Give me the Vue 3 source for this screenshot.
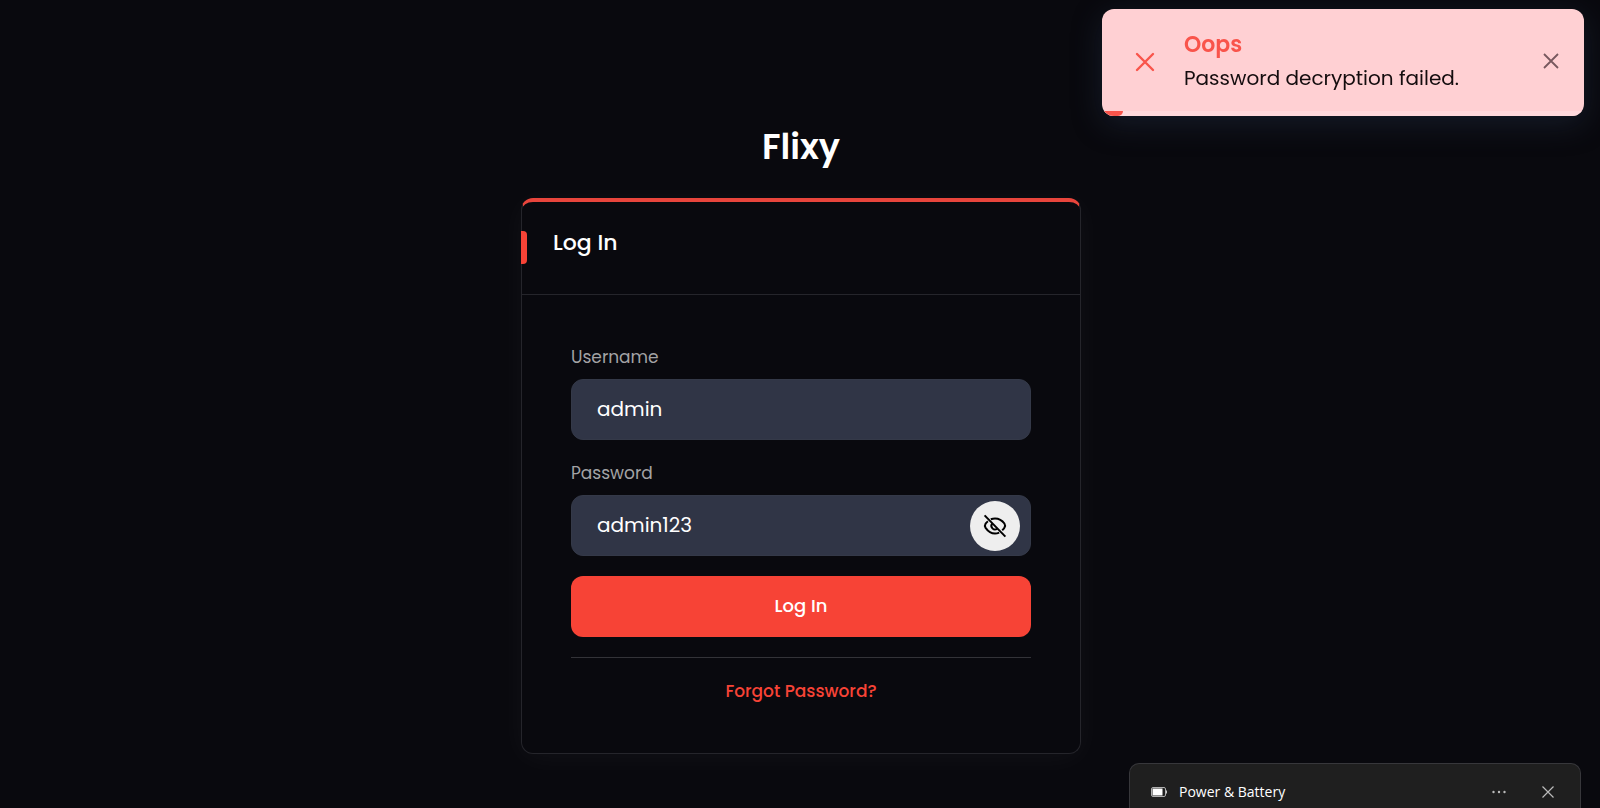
<script setup>
import { computed, ref } from "vue";

const username = ref("admin");
const password = ref("admin123");
const passwordVisible = ref(true);
const toast = ref({ title: "Oops", message: "Password decryption failed.", progress: 4.4 });
const noticeOpen = ref(true);

const passwordType = computed(() => (passwordVisible.value ? "text" : "password"));

function togglePassword() {
  passwordVisible.value = !passwordVisible.value;
}

function closeToast() {
  toast.value = null;
}
</script>

<template>
  <main class="login-page">
    <h1 class="brand">Flixy</h1>

    <section class="card">
      <header class="card-head">
        <h2>Log In</h2>
      </header>

      <form class="card-body" @submit.prevent>
        <div class="field">
          <label for="username">Username</label>
          <input id="username" v-model="username" class="text-input" type="text" autocomplete="off" spellcheck="false" />
        </div>

        <div class="field">
          <label for="password">Password</label>
          <div class="password-box">
            <input
              id="password"
              v-model="password"
              class="text-input"
              :type="passwordType"
              autocomplete="off"
              spellcheck="false"
            />
            <button class="eye-button" type="button" aria-label="Toggle password visibility" @click="togglePassword">
              <svg viewBox="0 0 24 24" aria-hidden="true">
                <path d="M7.8 5.2C9.1 4.7 10.5 4.4 12 4.4c4.6 0 7.8 2.8 9.4 5.1.9 1.4.9 2.900 0 4.300-.6.9-1.300 1.700-2.200 2.500" />
                <path d="M4.9 7.2C4 7.9 3.2 8.8 2.6 9.6c-.9 1.4-.9 2.9 0 4.3 1.6 2.3 4.8 5.7 9.4 5.7 1.5 0 2.9-.4 4.2-1" />
                <path d="M9.2 9.6a3.6 3.6 0 0 0 5 5.1" />
                <path d="M1.6 1.4l20.8 21.2" />
              </svg>
            </button>
          </div>
        </div>

        <button class="submit" type="submit">Log In</button>
        <hr class="divider" />
        <a class="forgot" href="#">Forgot Password?</a>
      </form>
    </section>
  </main>

  <aside v-if="toast" class="toast" role="alert">
    <svg class="toast-icon" viewBox="0 0 20 20" aria-hidden="true">
      <path d="M2 2l16 16M18 2L2 18" />
    </svg>
    <div class="toast-copy">
      <strong>{{ toast.title }}</strong>
      <p>{{ toast.message }}</p>
    </div>
    <button class="toast-close" type="button" aria-label="Close" @click="closeToast">
      <svg viewBox="0 0 16 16" aria-hidden="true">
        <path d="M1 1l14 14M15 1L1 15" />
      </svg>
    </button>
    <div class="toast-track">
      <div class="toast-progress" :style="{ width: toast.progress + '%' }"></div>
    </div>
  </aside>

  <aside v-if="noticeOpen" class="notice">
    <svg class="battery" viewBox="0 0 17 10" aria-hidden="true">
      <rect x="0.5" y="0.5" width="14" height="9" rx="1.5" fill="none" stroke="#b0b0b0" />
      <rect x="1.5" y="1.5" width="10" height="7" fill="#fff" />
      <path d="M15.5 3.5v3" stroke="#c8c8c8" />
    </svg>
    <span class="notice-title">Power &amp; Battery</span>
    <button type="button" aria-label="More options">
      <svg width="16" height="16" viewBox="0 0 16 16" aria-hidden="true">
        <g fill="currentColor">
          <circle cx="2.5" cy="8" r="1.2" />
          <circle cx="8" cy="8" r="1.2" />
          <circle cx="13.5" cy="8" r="1.2" />
        </g>
      </svg>
    </button>
    <button type="button" aria-label="Dismiss" @click="noticeOpen = false">
      <svg width="12" height="12" viewBox="0 0 12 12" aria-hidden="true">
        <path d="M.5.5l11 11M11.5.5l-11 11" fill="none" stroke="currentColor" stroke-width="1.2" />
      </svg>
    </button>
  </aside>
</template>

<style>
body {
  margin: 0;
  background: #09090e;
}
</style>

<style scoped>
.login-page,
.toast {
  font-family: Poppins, Inter, sans-serif;
}

.login-page {
  display: flex;
  flex-direction: column;
  align-items: center;
  box-sizing: border-box;
  min-height: 100vh;
  padding: 121px 16px 48px 18px;
  color: #fff;
}

.brand {
  margin: 0 0 25px;
  font-size: 35px;
  font-weight: 600;
  line-height: 52px;
}

.card {
  box-sizing: border-box;
  width: 100%;
  max-width: 560px;
  border: 1px solid #25252b;
  border-top: 4px solid #e8453c;
  border-radius: 12px;
  background: #09090e;
  box-shadow: 0 4px 30px rgba(255, 255, 255, 0.04);
}

.card-head {
  position: relative;
  padding: 24px 31px 34px;
  border-bottom: 1px solid #25252b;
}

.card-head::before {
  content: "";
  position: absolute;
  top: 29px;
  left: -1px;
  width: 6px;
  height: 33px;
  border-radius: 0 4px 4px 0;
  background: #f74336;
}

.card-head h2 {
  margin: 0;
  font-size: 22px;
  font-weight: 500;
  line-height: 34px;
}

.card-body {
  display: flex;
  flex-direction: column;
  gap: 20px;
  padding: 49px;
}

.field {
  display: flex;
  flex-direction: column;
  gap: 9px;
}

.field label {
  color: #a3a3a5;
  font-size: 17px;
  line-height: 26px;
}

.text-input {
  box-sizing: border-box;
  width: 100%;
  height: 61px;
  padding: 0 25px 2px;
  border: 1px solid #343948;
  border-radius: 12px;
  outline: none;
  background: #303546;
  color: #fff;
  font: inherit;
  font-size: 20px;
}

.password-box {
  position: relative;
}

.password-box .text-input {
  padding-right: 72px;
}

.eye-button {
  position: absolute;
  top: 6px;
  right: 11px;
  display: flex;
  align-items: center;
  justify-content: center;
  width: 50px;
  height: 50px;
  padding: 0;
  border: 0;
  border-radius: 50%;
  background: #eee;
  cursor: pointer;
}

.eye-button svg {
  width: 24px;
  height: 24px;
  fill: none;
  stroke: #000;
  stroke-width: 2;
}

.submit {
  height: 61px;
  padding: 0 0 2px;
  border: 0;
  border-radius: 12px;
  background: #f74336;
  color: #fff;
  font: inherit;
  font-size: 18px;
  font-weight: 500;
  cursor: pointer;
}

.divider {
  width: 100%;
  height: 1px;
  margin: 0;
  border: 0;
  background: #333338;
}

.forgot {
  align-self: center;
  color: #f74336;
  font-size: 17px;
  font-weight: 500;
  line-height: 26px;
  text-decoration: none;
}

.toast {
  position: fixed;
  top: 9px;
  right: 16px;
  display: flex;
  align-items: center;
  box-sizing: border-box;
  width: 482px;
  max-width: calc(100% - 32px);
  padding: 19px 25px 22px 33px;
  overflow: hidden;
  border-radius: 12px;
  background: #ffd0d3;
  box-shadow: 0 8px 30px rgba(40, 55, 80, 0.4);
}

.toast-icon {
  flex: none;
  width: 20px;
  height: 20px;
  margin: 2px 29px 0 0;
  fill: none;
  stroke: #f9544b;
  stroke-width: 2.4;
  stroke-linecap: round;
}

.toast-copy {
  flex: 1;
  min-width: 0;
}

.toast-copy strong {
  display: block;
  color: #f9544b;
  font-size: 22px;
  font-weight: 600;
  line-height: 34px;
}

.toast-copy p {
  margin: 0;
  color: #140c0e;
  font-size: 20px;
  line-height: 32px;
}

.toast-close {
  display: flex;
  padding: 0;
  border: 0;
  background: transparent;
  cursor: pointer;
}

.toast-close svg {
  width: 16px;
  height: 16px;
  fill: none;
  stroke: #78585e;
  stroke-width: 1.8;
}

.toast-track {
  position: absolute;
  right: 0;
  bottom: 0;
  left: 0;
  height: 5px;
  background: #ffd9dc;
}

.toast-progress {
  height: 100%;
  border-radius: 0 0 5px;
  background: #f9544b;
}

.notice {
  position: fixed;
  right: 19px;
  bottom: 0;
  display: flex;
  align-items: center;
  gap: 35px;
  box-sizing: border-box;
  width: 452px;
  max-width: 100%;
  height: 45px;
  padding: 12px 26px 0 21px;
  border: 1px solid #37373b;
  border-bottom: 0;
  border-radius: 10px 10px 0 0;
  background: #1f1f1f;
  color: #bbb;
}

.battery {
  width: 17px;
  height: 10px;
  margin-right: -24px;
}

.notice-title {
  flex: 1;
  color: #fff;
  font-family: "Segoe UI", "Open Sans", sans-serif;
  font-size: 14px;
  line-height: 20px;
}

.notice button {
  display: flex;
  padding: 0;
  border: 0;
  background: transparent;
  color: inherit;
}
</style>
